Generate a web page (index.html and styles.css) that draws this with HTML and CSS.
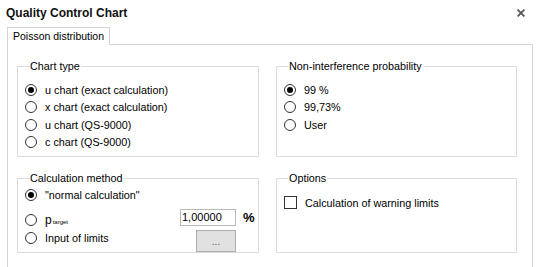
FILE: index.html
```html
<!DOCTYPE html>
<html lang="en">
<head>
  <meta charset="UTF-8">
  <title>Quality Control Chart</title>
  <link rel="stylesheet" href="styles.css">
</head>
<body>
  <div class="titlebar">
    <span class="title">Quality Control Chart</span>
    <svg class="close" width="8" height="8" viewBox="0 0 8 8">
      <path d="M0.6 0.6 L7.4 7.4 M7.4 0.6 L0.6 7.4" stroke="#555" stroke-width="1.8"/>
    </svg>
  </div>

  <div class="tabstrip">
    <div class="tab">Poisson distribution</div>
    <div class="tab-fill"></div>
  </div>

  <div class="panel">
    <fieldset class="group">
      <legend>Chart type</legend>
      <label class="opt"><span class="radio checked"></span>u chart (exact calculation)</label>
      <label class="opt"><span class="radio"></span>x chart (exact calculation)</label>
      <label class="opt"><span class="radio"></span>u chart (QS-9000)</label>
      <label class="opt"><span class="radio"></span>c chart (QS-9000)</label>
    </fieldset>

    <fieldset class="group">
      <legend>Non-interference probability</legend>
      <label class="opt"><span class="radio checked"></span>99 %</label>
      <label class="opt"><span class="radio"></span>99,73%</label>
      <label class="opt"><span class="radio"></span>User</label>
    </fieldset>

    <fieldset class="group calc">
      <legend>Calculation method</legend>
      <div class="row first">
        <label class="opt"><span class="radio checked"></span>"normal calculation"</label>
      </div>
      <div class="row tall">
        <label class="opt shift"><span class="radio"></span><span class="p">p<sub>target</sub></span></label>
        <input class="num" type="text" value="1,00000">
        <span class="pct">%</span>
      </div>
      <div class="row last">
        <label class="opt"><span class="radio"></span>Input of limits</label>
        <button class="dots">...</button>
      </div>
    </fieldset>

    <fieldset class="group options">
      <legend>Options</legend>
      <label class="opt"><span class="check"></span>Calculation of warning limits</label>
    </fieldset>
  </div>
</body>
</html>
```

FILE: styles.css
```css
* {
  box-sizing: border-box;
}
html, body {
  height: 100%;
}
body {
  margin: 0;
  font-family: "Liberation Sans", Arial, sans-serif;
  font-size: 10.8px;
  color: #000;
  background-color: #fff;
  display: flex;
  flex-direction: column;
  overflow: hidden;
}
.titlebar {
  height: 27px;
  padding: 6px 12px 0 6px;
  display: flex;
  justify-content: space-between;
  align-items: flex-start;
}
.title {
  font-weight: bold;
  font-size: 12px;
  line-height: 14px;
  color: #111;
}
.close {
  margin-top: 3px;
}
.tabstrip {
  display: flex;
  height: 18px;
  margin: 0 4px 0 7px;
}
.tab {
  border: 1px solid #d4d4d4;
  border-bottom: none;
  padding: 2px 5px 0;
  font-size: 10.5px;
  line-height: 13px;
}
.tab-fill {
  flex: 1;
  border-bottom: 1px solid #d4d4d4;
}
.panel {
  flex: 1;
  margin: 0 4px 0 7px;
  border: 1px solid #d4d4d4;
  border-top: none;
  border-bottom: none;
  padding: 15px 14px 0 9px;
  display: grid;
  grid-template-columns: 242px 241px;
  grid-template-rows: 97px 81px;
  gap: 15px 17px;
  align-content: start;
}
.group {
  margin: 0;
  min-width: 0;
  border: 1px solid #dcdcdc;
  padding: 8px 3px 0 7px;
}
.group legend {
  margin-left: 4px;
  padding: 0 1px;
  line-height: 13px;
}
.opt {
  display: flex;
  align-items: center;
  gap: 8px;
  height: 17.5px;
  white-space: nowrap;
}
.radio {
  flex: none;
  width: 12px;
  height: 12px;
  border: 1px solid #333;
  border-radius: 50%;
  display: flex;
  align-items: center;
  justify-content: center;
}
.radio.checked::after {
  content: "";
  width: 6px;
  height: 6px;
  border-radius: 50%;
  background-color: #000;
}
.check {
  flex: none;
  width: 13px;
  height: 13px;
  border: 1px solid #333;
}
.calc {
  padding-top: 1px;
}
.options {
  padding-top: 9px;
}
.row {
  display: flex;
  align-items: center;
}
.row .opt {
  flex: 1;
}
.row.first {
  height: 18px;
}
.row.tall {
  height: 26px;
}
.row.tall .shift {
  margin-top: 5px;
}
.row.last {
  height: 22px;
  align-items: flex-start;
}
.row.last .opt {
  height: 16px;
}
.p {
  font-size: 12px;
}
.p sub {
  font-size: 6px;
  vertical-align: baseline;
  margin-left: 1px;
}
.num {
  width: 56px;
  height: 17px;
  margin: 0;
  padding: 0 0 0 1px;
  border: 1px solid #b9b9b9;
  font-family: inherit;
  font-size: 11px;
  color: #000;
  outline: none;
}
.pct {
  width: 12px;
  margin-left: 7px;
  font-weight: bold;
  font-size: 13px;
}
.dots {
  width: 40px;
  height: 22px;
  margin: 0 19px 0 0;
  padding: 0;
  background-color: #e1e1e1;
  border: 1px solid #adadad;
  font-family: inherit;
  font-size: 10px;
  color: #555;
}
```
